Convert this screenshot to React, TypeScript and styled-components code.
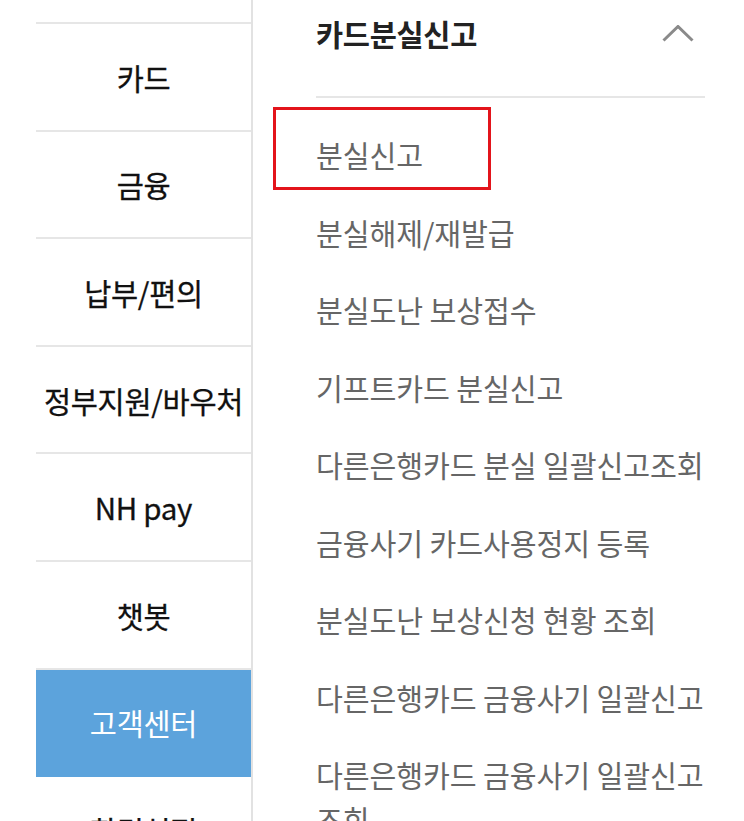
import React from 'react';
import styled, { createGlobalStyle } from 'styled-components';

const Global = createGlobalStyle`
  html, body { margin: 0; padding: 0; background: #fff; }
  body { font-family: "Noto Sans CJK KR", "Noto Sans", sans-serif; }
  * { box-sizing: border-box; }
`;

const Page = styled.div`
  display: flex;
  width: 744px;
  height: 821px;
  overflow: hidden;
  background: #fff;
`;

const Side = styled.nav`
  width: 217px;
  margin-left: 36px;
  border-right: 2px solid #e2e2e2;
  flex-shrink: 0;
`;

const SideList = styled.ul`
  list-style: none;
  margin: 22px 0 0;
  padding: 0;
  border-top: 2px solid #e6e6e6;
`;

const SideItem = styled.li<{ $active?: boolean }>`
  height: 107.6px;
  border-bottom: 2px solid ${(p) => (p.$active ? '#5ca3dc' : '#e6e6e6')};
  display: flex;
  align-items: center;
  justify-content: center;
  font-size: 29.5px;
  font-weight: 400;
  letter-spacing: -0.3px;
  white-space: nowrap;
  color: ${(p) => (p.$active ? '#ffffff' : '#111111')};
  background: ${(p) => (p.$active ? '#5ca3dc' : 'transparent')};
  -webkit-text-stroke: ${(p) => (p.$active ? '0' : '0.3px #111')};
`;

const Content = styled.section`
  flex: 1;
  padding: 0 39px 0 63px;
`;

const Header = styled.div`
  display: flex;
  align-items: flex-start;
  justify-content: space-between;
  height: 98px;
  padding-top: 14px;
  border-bottom: 2px solid #e6e6e6;
`;

const Title = styled.h2`
  margin: 0;
  font-size: 29.5px;
  line-height: 38px;
  font-weight: 700;
  color: #222;
  letter-spacing: -0.3px;
`;

const Chevron = styled.svg`
  margin: 11px 11px 0 0;
`;

const SubList = styled.ul`
  list-style: none;
  margin: 0;
  padding: 18px 0 0;
`;

const SubItem = styled.li`
  position: relative;
  font-size: 29.2px;
  line-height: 45px;
  padding: 16.25px 0;
  color: #666;
  letter-spacing: -0.1px;
`;

const Highlight = styled.span`
  position: absolute;
  top: -9px;
  left: -43px;
  width: 218px;
  height: 83px;
  border: 3px solid #e3141b;
  pointer-events: none;
`;

const sideItems = ['카드', '금융', '납부/편의', '정부지원/바우처', 'NH pay', '챗봇', '고객센터', '환경설정'];
const subItems = [
  '분실신고',
  '분실해제/재발급',
  '분실도난 보상접수',
  '기프트카드 분실신고',
  '다른은행카드 분실 일괄신고조회',
  '금융사기 카드사용정지 등록',
  '분실도난 보상신청 현황 조회',
  '다른은행카드 금융사기 일괄신고',
  '다른은행카드 금융사기 일괄신고 조회',
];

export default function App() {
  return (
    <>
      <Global />
      <Page>
        <Side>
          <SideList>
            {sideItems.map((s) => (
              <SideItem key={s} $active={s === '고객센터'}>
                {s}
              </SideItem>
            ))}
          </SideList>
        </Side>
        <Content>
          <Header>
            <Title>카드분실신고</Title>
            <Chevron width="32" height="17" viewBox="0 0 32 17">
              <path d="M1.5 15.5 L16 1.5 L30.5 15.5" fill="none" stroke="#8a8a8a" strokeWidth="3" />
            </Chevron>
          </Header>
          <SubList>
            {subItems.map((s, i) => (
              <SubItem key={s}>
                {i === 0 && <Highlight />}
                {s}
              </SubItem>
            ))}
          </SubList>
        </Content>
      </Page>
    </>
  );
}
